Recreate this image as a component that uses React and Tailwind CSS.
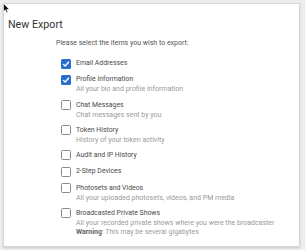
import React from "react";

const items = [
  { label: "Email Addresses", checked: true },
  { label: "Profile Information", checked: true, desc: ["All your bio and profile information"] },
  { label: "Chat Messages", desc: ["Chat messages sent by you"] },
  { label: "Token History", desc: ["History of your token activity"] },
  { label: "Audit and IP History" },
  { label: "2-Step Devices" },
  { label: "Photosets and Videos", desc: ["All your uploaded photosets, videos, and PM media"] },
  {
    label: "Broadcasted Private Shows",
    desc: ["All your recorded private shows where you were the broadcaster"],
    warning: true,
  },
];

const Checkbox = ({ checked }) =>
  checked ? (
    <span className="w-[10px] h-[10px] rounded-[1.5px] bg-[#2a6fcf] flex items-center justify-center shrink-0">
      <svg width="8" height="8" viewBox="0 0 8 8">
        <path d="M1.2 4.2 L3.2 6 L6.9 1.8" stroke="#fff" strokeWidth="1.4" fill="none" />
      </svg>
    </span>
  ) : (
    <span className="w-[10px] h-[10px] rounded-[1.5px] border border-[#8a8a8a] bg-white shrink-0" />
  );

export default function App() {
  return (
    <div className="relative w-[305px] h-[250px] bg-[#ededed] pt-[3px] pl-[3px] pr-[5px] pb-[3px] font-['Roboto',sans-serif]">
      <div className="h-[244px] bg-white border border-[#d6d6d6] shadow-[0_1px_2px_rgba(0,0,0,0.15)] pl-[4px] pt-[13px]">
        <h1 className="text-[10.7px] leading-[16px] text-[#333]">New Export</h1>
        <p className="ml-[48px] mt-[5px] text-[7px] leading-[10px] text-[#555]">
          Please select the items you wish to export:
        </p>
        <div className="ml-[53px] mt-[10px] flex flex-col gap-[5.4px]">
          {items.map((it) => (
            <div key={it.label} className="flex flex-col">
              <label className="flex items-center gap-[5px] h-[11px]">
                <Checkbox checked={it.checked} />
                <span className="text-[6.9px] leading-[11px] text-[#4a4a4a]">{it.label}</span>
              </label>
              {it.desc &&
                it.desc.map((d) => (
                  <div key={d} className="pl-[15px] text-[7px] leading-[8.8px] text-[#9a9a9a]">
                    {d}
                  </div>
                ))}
              {it.warning && (
                <div className="pl-[15px] text-[7px] leading-[8.8px] text-[#9a9a9a]">
                  <span className="font-bold text-[#666]">Warning</span>: This may be several gigabytes
                </div>
              )}
            </div>
          ))}
        </div>
      </div>
      <svg className="absolute left-[3px] top-[3px]" width="7" height="11" viewBox="0 0 7 11">
        <path d="M0.5 0.5 L0.5 8.5 L2.4 6.8 L3.7 9.8 L4.9 9.3 L3.7 6.4 L6.2 6.3 Z" fill="#000" stroke="#fff" strokeWidth="0.6" />
      </svg>
    </div>
  );
}
